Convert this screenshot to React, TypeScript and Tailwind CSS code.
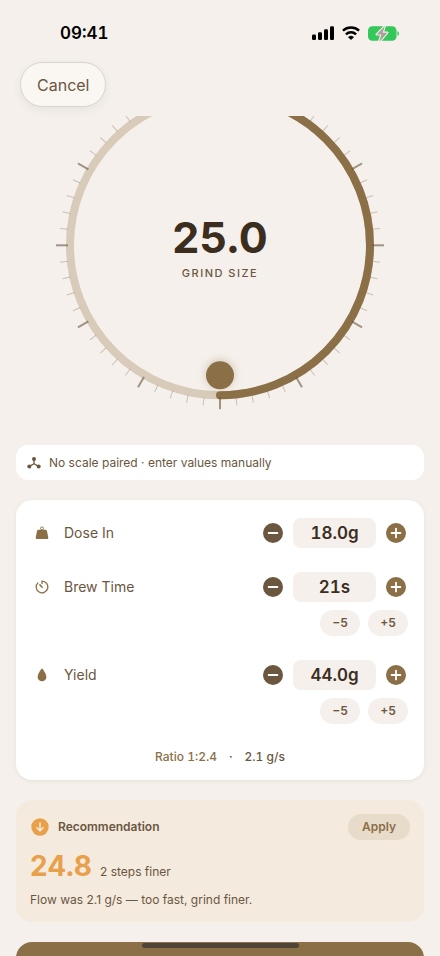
import React, { useState } from "react";
import clsx from "clsx";

const TICKS = Array.from({ length: 60 }, (_, i) => i);

function StatusBar() {
  return (
    <div className="flex h-[62px] shrink-0 items-start justify-between pt-[21px] pr-[41px] pl-[60px] text-black">
      <span className="text-[17px] leading-6 font-semibold tabular-nums">09:41</span>

      <div className="flex h-6 items-center gap-[7px]">
        <svg width="22" height="14" viewBox="0 0 22 14" fill="currentColor" aria-hidden="true">
          <rect x="0" y="8.5" width="4" height="5.5" rx="1.3" />
          <rect x="6" y="6.3" width="4" height="7.7" rx="1.3" />
          <rect x="12" y="3.3" width="4" height="10.7" rx="1.3" />
          <rect x="18" y="0.3" width="4" height="13.7" rx="1.3" />
        </svg>
        <svg width="20" height="14" viewBox="0 0 20 14" fill="none" stroke="currentColor" aria-hidden="true">
          <path d="M1.900 4.700a12 12 0 0 1 16.200 0" strokeWidth="2.4" strokeLinecap="butt" />
          <path d="M4.900 8.300a7.400 7.400 0 0 1 10.200 0" strokeWidth="2.4" strokeLinecap="butt" />
          <path d="M10 13.600 7.400 11.200a3.800 3.800 0 0 1 5.200 0z" fill="currentColor" strokeWidth="0.6" strokeLinejoin="round" />
        </svg>
        <svg width="31" height="15" viewBox="0 0 31 15" aria-hidden="true">
          <rect x="0" y="0.2" width="28.5" height="14.6" rx="4.3" fill="#34c759" />
          <path d="M29.4 5.2c1 .3 1.6 1.2 1.6 2.3s-.6 2-1.6 2.3z" fill="#34c759" />
          <path
            d="M16.6-.6 8.2 8.1c-.3.4-.1.9.4.9h4l-2 6.4h1.9l7.4-8.4c.3-.4.1-.9-.4-.9h-4l2.1-6.7z"
            fill="#a8a29c"
            stroke="#f5f0eb"
            strokeWidth="1.1"
          />
        </svg>
      </div>
    </div>
  );
}

function GrindDial({ value }: { value: number }) {
  return (
    <div className="relative mx-auto -mt-10 w-[338px]">
      <svg viewBox="0 0 338 338" className="block w-full" fill="none" aria-hidden="true">
        <circle cx="169" cy="169.300" r="150" stroke="#d8cbb9" strokeWidth="8" />
        <path d="M169 19.300a150 150 0 0 1 0 300" stroke="#8b6f47" strokeWidth="8" strokeLinecap="round" />
        {TICKS.map((i) => {
          const major = i % 5 === 0;
          return (
            <line
              key={i}
              x1="169"
              x2="169"
              y1={major ? 17 : 16}
              y2={major ? 5 : 8}
              stroke={major ? "#6b563f" : "#8a7a68"}
              strokeOpacity={major ? 0.6 : 0.4}
              strokeWidth={major ? 2 : 1}
              transform={`translate(0 0.3) rotate(${i * 6} 169 169)`}
            />
          );
        })}
        <circle
          cx="169"
          cy="299.300"
          r="14"
          fill="#8b6f47"
          className="drop-shadow-[0_-1px_4px_rgba(139,111,71,0.35)]"
        />
      </svg>

      <div className="absolute inset-0 flex flex-col items-center pt-[134px]">
        <span className="text-[43px] leading-[54px] font-bold text-[#3b2e1e]">{value.toFixed(1)}</span>
        <span className="pt-px text-[11px] leading-4 font-medium tracking-[1.5px] text-[#6b563f] uppercase">
          Grind size
        </span>
      </div>
    </div>
  );
}

function ScaleIcon() {
  return (
    <svg width="14" height="14" viewBox="0 0 14 14" className="shrink-0 text-[#6b563f]" aria-hidden="true">
      <path d="M7 3v4.8M7 7.8 2.4 10.4M7 7.8l4.6 2.6" stroke="currentColor" strokeWidth="1.3" fill="none" />
      <circle cx="7" cy="3" r="2" fill="currentColor" />
      <circle cx="2.3" cy="10.5" r="2" fill="currentColor" />
      <circle cx="11.7" cy="10.5" r="2" fill="currentColor" />
    </svg>
  );
}

function WeightIcon() {
  return (
    <svg width="14" height="14" viewBox="0 0 14 14" aria-hidden="true">
      <circle cx="7" cy="2.4" r="1.5" fill="none" stroke="currentColor" strokeWidth="0.9" />
      <path
        d="M3.5 3.7h7c.7 0 1.2.4 1.4 1l1.4 6.9c.1.8-.4 1.5-1.3 1.5H2c-.9 0-1.4-.7-1.3-1.5l1.4-6.9c.2-.6.7-1 1.4-1z"
        fill="currentColor"
      />
    </svg>
  );
}

function TimerIcon() {
  return (
    <svg
      width="14"
      height="14"
      viewBox="0 0 14 14"
      fill="none"
      stroke="currentColor"
      strokeWidth="1.3"
      strokeLinecap="round"
      aria-hidden="true"
    >
      <path d="M7 3.5V1.2a5.8 5.8 0 1 1-4.1 1.7" />
      <path d="M4.9 4.9 7.2 7.2" strokeWidth="1.5" />
    </svg>
  );
}

function DropIcon() {
  return (
    <svg width="14" height="14" viewBox="0 0 14 14" fill="currentColor" aria-hidden="true">
      <path d="M7 .6c.3 0 .5.2.7.5 1.8 2.8 3.7 5.3 3.7 7.8a4.4 4.4 0 0 1-8.8 0c0-2.500 1.9-5 3.7-7.8.2-.3.4-.5.7-.5z" />
    </svg>
  );
}

function StepButton({ label, plus, onClick }: { label: string; plus?: boolean; onClick: () => void }) {
  return (
    <button
      type="button"
      aria-label={label}
      onClick={onClick}
      className={clsx("flex size-6 items-center justify-center", plus ? "text-[#8b6f47]" : "text-[#6b563f]")}
    >
      <svg width="20" height="20" viewBox="0 0 20 20" aria-hidden="true">
        <circle cx="10" cy="10" r="10" fill="currentColor" />
        <path
          d={plus ? "M5.6 10h8.8M10 5.6v8.8" : "M5.6 10h8.8"}
          stroke="#fff"
          strokeWidth="1.8"
          strokeLinecap="round"
        />
      </svg>
    </button>
  );
}

type StepperRowProps = {
  id: string;
  label: string;
  icon: React.ReactNode;
  value: number;
  unit: string;
  digits?: number;
  quick?: boolean;
  step: number;
  onChange: (v: number) => void;
};

function StepperRow({ id, label, icon, value, unit, digits = 0, quick, step, onChange }: StepperRowProps) {
  const change = (by: number) => onChange(Math.max(0, value + by));

  return (
    <div className="flex flex-col gap-2">
      <div className="flex h-[30px] items-center gap-2">
        <label htmlFor={id} className="flex flex-1 items-center gap-3 text-sm leading-5 text-[#6b563f]">
          <span className="flex w-5 justify-center text-[#8b6f47]">{icon}</span>
          {label}
        </label>
        <StepButton label={`Decrease ${label}`} onClick={() => change(-step)} />
        <input
          id={id}
          inputMode="decimal"
          value={`${value.toFixed(digits)}${unit}`}
          onChange={(e) => onChange(parseFloat(e.target.value) || 0)}
          className="h-[30px] w-[83px] rounded-lg bg-[#f5f0eb] text-center text-[17px] font-semibold text-[#3b2e1e] tabular-nums outline-none"
        />
        <StepButton plus label={`Increase ${label}`} onClick={() => change(step)} />
      </div>

      {quick ? (
        <div className="flex justify-end gap-2">
          {[-5, 5].map((n) => (
            <button
              key={n}
              type="button"
              onClick={() => change(n)}
              className="h-[26px] w-10 rounded-full bg-[#f5f0eb] text-xs font-semibold text-[#6b563f]"
            >
              {n < 0 ? "−5" : "+5"}
            </button>
          ))}
        </div>
      ) : null}
    </div>
  );
}

export default function App() {
  const [grind, setGrind] = useState(25);
  const [dose, setDose] = useState(18);
  const [time, setTime] = useState(21);
  const [brewYield, setBrewYield] = useState(44);

  const ratio = dose > 0 ? brewYield / dose : 0;
  const flow = time > 0 ? brewYield / time : 0;

  return (
    <div className="relative flex h-dvh flex-col overflow-hidden bg-[#f5f0eb] font-[Inter,sans-serif]">
      <StatusBar />

      <div className="flex h-[54px] shrink-0 items-start px-5">
        <button
          type="button"
          className="h-[45px] rounded-full border border-[#d8d4ce] bg-[#faf7f3] px-4 text-base text-[#6b563f] shadow-[0_3px_10px_rgba(80,60,30,0.07)]"
        >
          Cancel
        </button>
      </div>

      <main className="min-h-0 flex-1 overflow-hidden">
        <GrindDial value={grind} />

        <div className="mt-[31px] flex flex-col gap-5 px-4">
          <div className="flex items-center gap-2 rounded-xl bg-white px-[11px] py-[9px] text-xs leading-[17px] text-[#6b563f]">
            <ScaleIcon />
            No scale paired · enter values manually
          </div>

          <section className="flex flex-col gap-6 rounded-2xl bg-white px-4 pt-[18px] pb-[14px] shadow-[0_1px_4px_rgba(80,60,30,0.08)]">
            <StepperRow
              id="dose"
              label="Dose In"
              icon={<WeightIcon />}
              value={dose}
              unit="g"
              digits={1}
              step={0.1}
              onChange={setDose}
            />
            <StepperRow
              id="time"
              label="Brew Time"
              icon={<TimerIcon />}
              value={time}
              unit="s"
              quick
              step={1}
              onChange={setTime}
            />
            <StepperRow
              id="yield"
              label="Yield"
              icon={<DropIcon />}
              value={brewYield}
              unit="g"
              digits={1}
              quick
              step={0.1}
              onChange={setBrewYield}
            />
            <p className="flex justify-center gap-3 text-xs leading-[18px] font-medium text-[#6b563f] tabular-nums">
              <span className="text-[#8b6f47]">Ratio 1:{ratio.toFixed(1)}</span>
              <span>·</span>
              <span>{flow.toFixed(1)} g/s</span>
            </p>
          </section>

          <section className="rounded-2xl bg-[#f4eade] p-[14px] text-xs text-[#6b563f]">
            <div className="flex items-center gap-2">
              <svg width="20" height="20" viewBox="0 0 20 20" fill="none" aria-hidden="true">
                <circle cx="10" cy="10" r="8.7" fill="#e8a04a" />
                <path
                  d="M10 6v7.6M6.9 10.8l3.1 3 3.1-3"
                  stroke="#fbf1e4"
                  strokeWidth="1.4"
                  strokeLinecap="round"
                  strokeLinejoin="round"
                />
              </svg>
              <h2 className="flex-1 font-semibold">Recommendation</h2>
              <button
                type="button"
                onClick={() => setGrind(24.8)}
                className="h-[26px] rounded-full bg-[#e7dbca] px-[14px] font-semibold text-[#8b6f47]"
              >
                Apply
              </button>
            </div>
            <div className="mt-2 flex items-baseline gap-2">
              <span className="text-[28px] leading-9 font-bold text-[#e8a04a]">24.8</span>
              <span>2 steps finer</span>
            </div>
            <p className="mt-2 leading-4">Flow was {flow.toFixed(1)} g/s — too fast, grind finer.</p>
          </section>

          <button type="button" aria-label="Save shot" className="h-[50px] w-full rounded-2xl bg-[#8b6f47]" />
        </div>
      </main>

      <div className="absolute inset-x-0 bottom-2 flex justify-center">
        <div className="h-[5px] w-[157px] rounded-full bg-[#4f4435]" />
      </div>
    </div>
  );
}
